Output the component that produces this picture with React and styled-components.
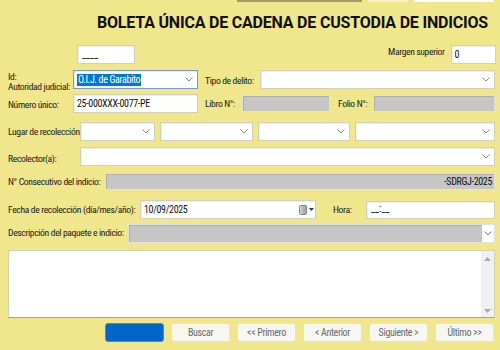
import React from "react";
import styled, { createGlobalStyle } from "styled-components";

const Global = createGlobalStyle`
  html, body { margin: 0; padding: 0; background: #F0E68C; }
  body { font-family: Roboto, "Liberation Sans", sans-serif; }
`;

const Page = styled.div`
  width: 500px;
  height: 350px;
  box-sizing: border-box;
  padding: 0 5px 0 8px;
  background: #F0E68C;
  overflow: hidden;
  font-family: Roboto, "Liberation Sans", sans-serif;
  font-stretch: 75%;
  font-size: 9.6px;
  letter-spacing: -0.35px;
  color: #1a1a1a;
  display: flex;
  flex-direction: column;
`;

const TopStrip = styled.div`
  display: flex;
  height: 2px;
  padding-left: 229px;
  gap: 6px;
`;

const StripPiece = styled.div`
  width: ${(p) => p.$w}px;
  background: ${(p) => p.$bg};
`;

const Title = styled.h1`
  margin: 12px 0 0 89px;
  font-size: 16px;
  font-weight: bold;
  font-stretch: 89%;
  letter-spacing: -0.2px;
  color: #111;
  line-height: 18px;
  height: 18px;
  white-space: nowrap;
`;

const Row = styled.div`
  display: flex;
  align-items: center;
  height: ${(p) => p.$h || 19}px;
  margin-top: ${(p) => p.$mt || 0}px;
  gap: ${(p) => p.$gap || 0}px;
`;

const Label = styled.span`
  width: ${(p) => (p.$w ? `${p.$w}px` : "auto")};
  flex: none;
  margin-left: ${(p) => p.$ml || 0}px;
  margin-top: ${(p) => p.$dy || 0}px;
  white-space: nowrap;
  line-height: 10px;
`;

const Stack = styled.div`
  width: ${(p) => p.$w}px;
  flex: none;
  display: flex;
  flex-direction: column;
  line-height: 10px;
  margin-top: 4px;
  white-space: nowrap;
`;

const Field = styled.div`
  box-sizing: border-box;
  height: ${(p) => p.$h || 19}px;
  width: ${(p) => (p.$w ? `${p.$w}px` : "auto")};
  flex: ${(p) => (p.$w ? "none" : "1")};
  margin-left: ${(p) => p.$ml || 0}px;
  background: ${(p) => (p.$gray ? "#C6C6C6" : "#fff")};
  border: 1px solid ${(p) => (p.$focus ? "#7A9CC8" : p.$gray ? "#E2E2DC" : "#D4D0B8")};
  box-shadow: inset 1px 1px 0 ${(p) => (p.$gray ? "#B0B0B0" : "#EEE")};
  display: flex;
  align-items: center;
  justify-content: ${(p) => (p.$right ? "flex-end" : "flex-start")};
  padding: 0 2px 0 3px;
  font-size: 10px;
  color: #111;
  white-space: nowrap;
  overflow: hidden;
`;

const Placeholder = styled.span`
  align-self: flex-end;
  margin-bottom: 3px;
  margin-left: 1px;
  letter-spacing: 0;
`;

const Selected = styled.span`
  background: #0078D7;
  color: #fff;
  padding: 0 1px;
  line-height: 12px;
`;

const ChevronWrap = styled.span`
  margin-left: auto;
  width: 12px;
  height: 100%;
  flex: none;
  display: flex;
  align-items: center;
  justify-content: center;
  background: ${(p) => (p.$white ? "#fff" : "transparent")};
`;

const Chevron = ({ white }) => (
  <ChevronWrap $white={white}>
    <svg width="8" height="5" viewBox="0 0 8 5">
      <polyline points="0.5,0.5 4,4 7.5,0.5" fill="none" stroke="#8a8a8a" strokeWidth="1" />
    </svg>
  </ChevronWrap>
);

const Select = ({ w, ml, gray, focus, children }) => (
  <Field $w={w} $ml={ml} $gray={gray} $focus={focus} style={gray ? { paddingRight: 0 } : undefined}>
    {children}
    <Chevron white={gray} />
  </Field>
);

const DateIcon = () => (
  <ChevronWrap style={{ width: 18 }}>
    <svg width="17" height="11" viewBox="0 0 17 11">
      <defs>
        <linearGradient id="cal" x1="0" x2="1">
          <stop offset="0" stopColor="#d8d8d8" />
          <stop offset="1" stopColor="#9a9a9a" />
        </linearGradient>
      </defs>
      <rect x="1.5" y="1.5" width="7" height="9" rx="1" fill="url(#cal)" stroke="#888" />
      <polygon points="11,4 16,4 13.5,7" fill="#2a3e6e" />
    </svg>
  </ChevronWrap>
);

const TextArea = styled.div`
  box-sizing: border-box;
  margin-top: 8px;
  height: 68px;
  background: #fff;
  border: 1px solid #D4D0B8;
  border-bottom-color: #A0A0A0;
  display: flex;
  justify-content: flex-end;
`;

const ScrollBar = styled.div`
  width: 13px;
  background: #F0F0F0;
  display: flex;
  flex-direction: column;
  justify-content: space-between;
  align-items: center;
  padding: 6px 0 4px;
  box-sizing: border-box;
`;

const Arrow = ({ up }) => (
  <svg width="7" height="4" viewBox="0 0 7 4">
    <polygon points={up ? "0,4 7,4 3.5,0" : "0,0 7,0 3.5,4"} fill="#A8A8A8" />
  </svg>
);

const ButtonBar = styled.div`
  display: flex;
  gap: 7px;
  margin-top: 5px;
  padding-left: 97px;
`;

const Button = styled.div`
  box-sizing: border-box;
  width: ${(p) => p.$w || 59}px;
  height: 19px;
  border-radius: 3px;
  background: ${(p) => (p.$primary ? "#0066CC" : "#F7F6F0")};
  border: 1px solid ${(p) => (p.$primary ? "#4A8AD0" : "#E6E2C8")};
  color: #6a6a6a;
  font-size: 10px;
  display: flex;
  align-items: center;
  justify-content: center;
  white-space: nowrap;
`;

export default function App() {
  return (
    <Page>
      <Global />
      <TopStrip>
        <StripPiece $w={125} $bg="#A39B6A" />
        <StripPiece $w={40} $bg="#F6F1C6" />
        <StripPiece $w={80} $bg="#FFFFFF" />
      </TopStrip>
      <Title>BOLETA ÚNICA DE CADENA DE CUSTODIA DE INDICIOS</Title>

      <Row $mt={13} $h={19}>
        <Field $w={58} $ml={69} $h={19}>
          <Placeholder>____</Placeholder>
        </Field>
        <Label $ml={253} $dy={-5}>Margen superior</Label>
        <Field $w={45} $ml={6}>0</Field>
      </Row>

      <Row $mt={6}>
        <Stack $w={65}>
          <span>Id:</span>
          <span>Autoridad judicial:</span>
        </Stack>
        <Select w={125} focus>
          <Selected>O.I.J. de Garabito</Selected>
        </Select>
        <Label $ml={7} $w={55} $dy={2}>Tipo de delito:</Label>
        <Select />
      </Row>

      <Row $mt={5}>
        <Label $w={65} $dy={2}>Número único:</Label>
        <Field $w={125}>25-000XXX-0077-PE</Field>
        <Label $ml={7} $w={37} $dy={1}>Libro N°:</Label>
        <Field $w={88} $gray $h={17} />
        <Label $ml={8} $w={35} $dy={1}>Folio N°:</Label>
        <Field $gray $h={17} />
      </Row>

      <Row $mt={9} $gap={5}>
        <Label $w={67}>Lugar de recolección:</Label>
        <Select w={75} />
        <Select w={93} />
        <Select w={92} />
        <Select />
      </Row>

      <Row $mt={6}>
        <Label $w={72} $dy={5}>Recolector(a):</Label>
        <Select />
      </Row>

      <Row $mt={6}>
        <Label $w={97}>N° Consecutivo del indicio:</Label>
        <Field $gray $right $h={17}>-SDRGJ-2025</Field>
      </Row>

      <Row $mt={9}>
        <Label $w={132}>Fecha de recolección (día/mes/año):</Label>
        <Field $w={176} style={{ paddingRight: 0 }}>
          10/09/2025
          <DateIcon />
        </Field>
        <Label $ml={17} $w={33}>Hora:</Label>
        <Field $h={18} style={{ paddingLeft: 3 }}>
          <Placeholder style={{ marginBottom: 4 }}>__:__</Placeholder>
        </Field>
      </Row>

      <Row $mt={5} $h={18}>
        <Label $w={120}>Descripción del paquete e indicio:</Label>
        <Select gray />
      </Row>

      <TextArea>
        <ScrollBar>
          <Arrow up />
          <Arrow />
        </ScrollBar>
      </TextArea>

      <ButtonBar>
        <Button $primary />
        <Button>Buscar</Button>
        <Button>{"<< Primero"}</Button>
        <Button>{"< Anterior"}</Button>
        <Button>{"Siguiente >"}</Button>
        <Button>{"Último >>"}</Button>
      </ButtonBar>
    </Page>
  );
}
